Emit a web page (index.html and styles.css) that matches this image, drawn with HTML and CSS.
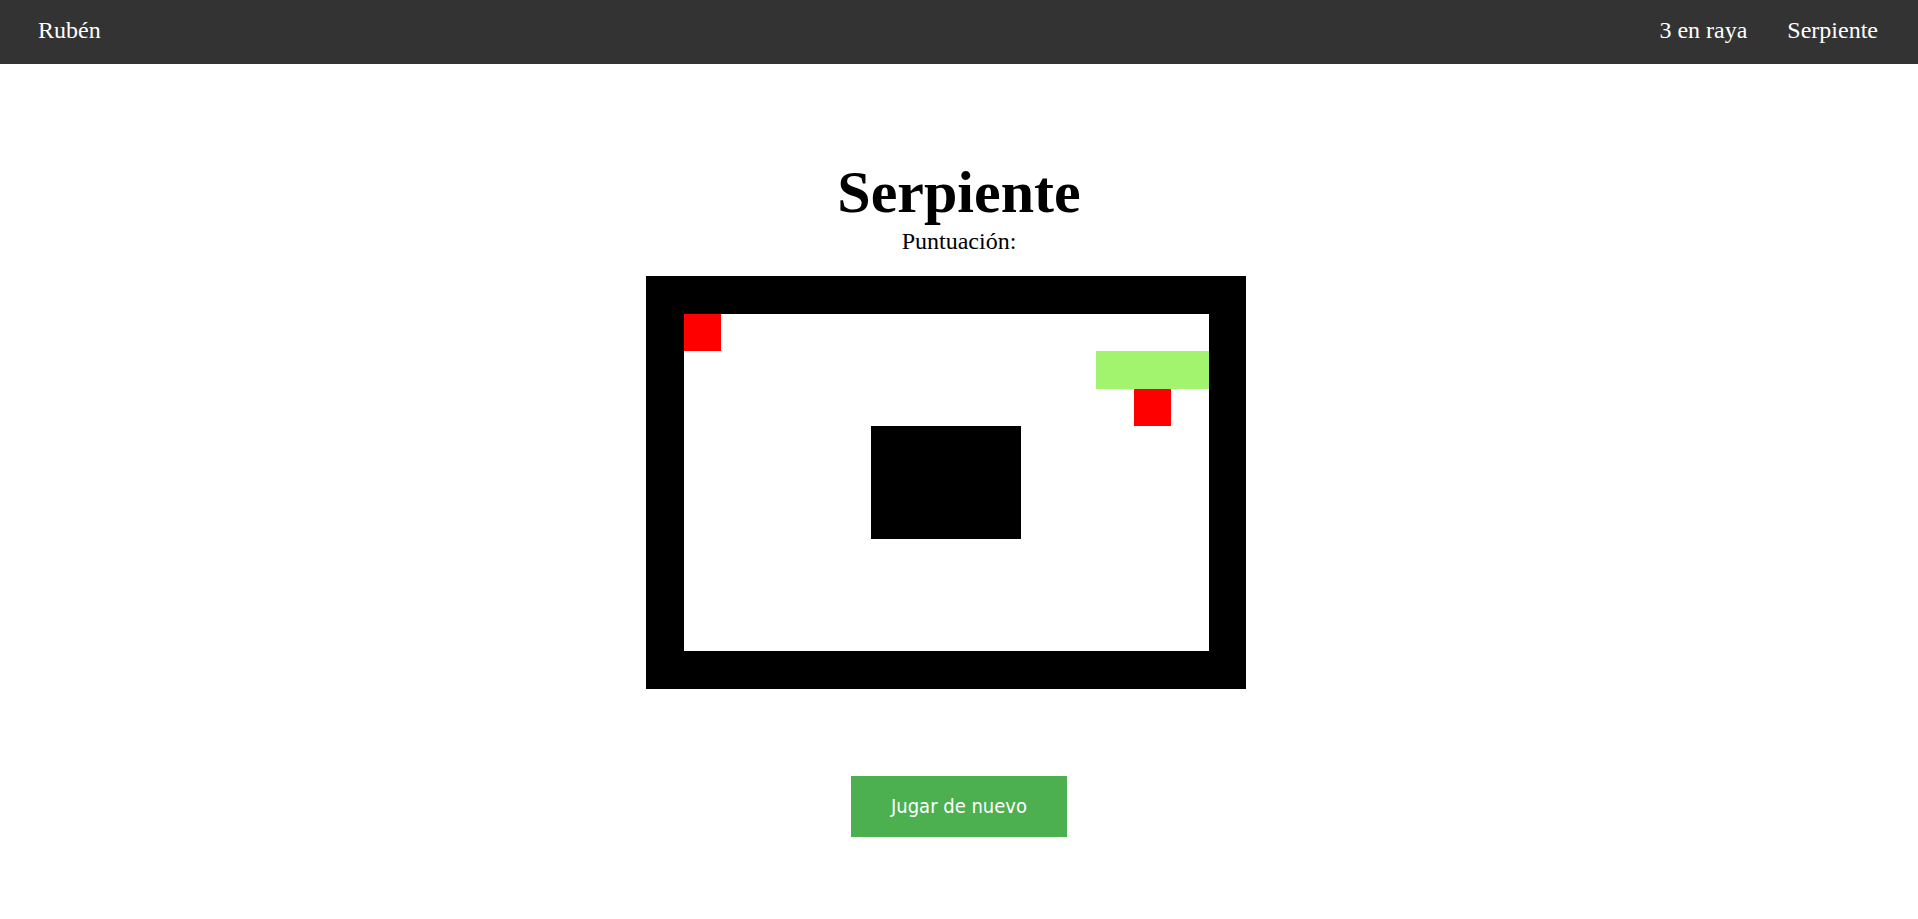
FILE: index.html
```html
<!DOCTYPE html>
<html lang="es">
<head>
<meta charset="utf-8">
<title>Serpiente</title>
<link rel="stylesheet" href="styles.css">
</head>
<body>
<nav class="topnav">
  <a class="brand" href="#">Rubén</a>
  <div class="links">
    <a href="#">3 en raya</a>
    <a href="#">Serpiente</a>
  </div>
</nav>
<main class="game">
  <h1 class="title">Serpiente</h1>
  <p class="score">Puntuación:</p>
  <div class="board">
    <div class="field"></div>
    <div class="cell food a"></div>
    <div class="cell snake"></div>
    <div class="cell food b"></div>
    <div class="cell wall"></div>
  </div>
  <button class="again">Jugar de nuevo</button>
</main>
</body>
</html>
```
FILE: styles.css
```css
html, body {
  margin: 0;
  padding: 0;
  background: #fff;
}
body {
  font-family: "Liberation Serif", "Times New Roman", serif;
}
.topnav {
  height: 64px;
  background: #333333;
  display: flex;
  justify-content: space-between;
  align-items: flex-start;
  padding: 0 20px 0 18px;
}
.topnav a {
  color: #fff;
  text-decoration: none;
  font-size: 24px;
  line-height: 60px;
  padding: 0 20px;
}
.links {
  display: flex;
}
.game {
  display: flex;
  flex-direction: column;
  align-items: center;
  padding-top: 94px;
}
.title {
  margin: 0;
  font-size: 60px;
  line-height: 69px;
  font-weight: bold;
}
.score {
  margin: 0;
  font-size: 24px;
  line-height: 28px;
}
.board {
  margin-top: 21px;
  margin-right: 26px;
  width: 600px;
  height: 412.5px;
  background: #000;
  display: grid;
  grid-template-columns: repeat(16, 37.5px);
  grid-template-rows: repeat(11, 37.5px);
}
.field {
  grid-column: 2 / 16;
  grid-row: 2 / 11;
  background: #fff;
}
.food {
  background: #ff0000;
}
.food.a {
  grid-column: 2;
  grid-row: 2;
}
.food.b {
  grid-column: 14;
  grid-row: 4;
}
.snake {
  grid-column: 13 / 16;
  grid-row: 3;
  background: #a2f36e;
}
.wall {
  grid-column: 7 / 11;
  grid-row: 5 / 8;
  background: #000;
}
.again {
  margin-top: 87px;
  width: 216px;
  height: 61px;
  border: none;
  background: #4caf50;
  color: #fff;
  font-family: "DejaVu Sans Condensed", "DejaVu Sans", sans-serif;
  font-stretch: condensed;
  font-size: 20px;
  cursor: pointer;
}
```
